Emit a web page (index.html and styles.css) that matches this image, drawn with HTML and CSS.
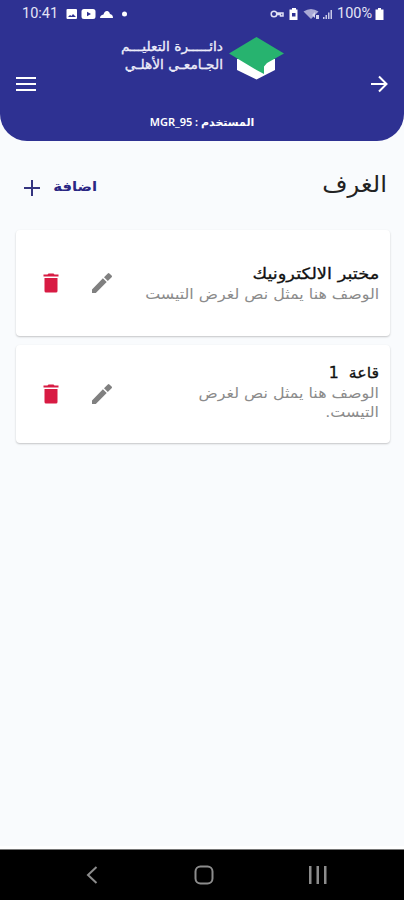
FILE: index.html
```html
<!DOCTYPE html>
<html lang="ar" dir="rtl">
<head>
    <meta charset="UTF-8">
    <meta name="viewport" content="width=device-width, initial-scale=1.0">
    <title>الغرف</title>
    <link rel="stylesheet" href="styles.css">
</head>
<body>

<div class="header">
    <div class="statusbar" dir="ltr">
        <span class="clock">10:41</span>
        <svg class="notifications" width="66" height="12" viewBox="0 0 66 12" fill="#fff">
            <path fill-rule="evenodd" d="M1.500 1h8.500q1 0 1 1v8q0 1-1 1h-8.500q-1 0-1-1v-8q0-1 1-1zM2 9h8l-3-3-1.500 2-1.500-1z"/>
            <path fill-rule="evenodd" d="M18 1h9q2.500 0 2.500 2.500v5q0 2.500-2.500 2.500h-9q-2.500 0-2.500-2.500v-5q0-2.500 2.500-2.500zM21 3.800v4.400l4-2.200z"/>
            <path d="M34 10q0-3 3.500-3.500 1-4 4-3.500 2 .3 2.500 3 3 .5 3 4z"/>
            <circle cx="58.500" cy="6" r="2.500"/>
        </svg>
        <svg class="signals" width="64" height="12" viewBox="0 0 64 12" fill="#fff">
            <g fill="none" stroke="#e0e0f4" stroke-width="1.500">
                <circle cx="4" cy="6" r="2.800"/>
                <path d="M7 5h6v3h-2.500V6.500H7"/>
            </g>
            <path fill-rule="evenodd" d="M22 0h4v1.500h1.500V12h-8V1.500H22zM22 5v3.500h3.500V5z"/>
            <path fill="#a9a9d5" d="M33.500 3.500q7.500-5 15 0l-7.500 7.500z"/>
            <path d="M42 7l3-3v6zM46 7h3v4h-3z" fill="#d5d5ee"/>
            <path fill="#c9c9e8" d="M53 9h1.500v2H53zM55.500 7H57v4h-1.500zM58 4.500h1.500V11H58zM60.500 2H62v9h-1.500z"/>
        </svg>
        <span class="percent">100%</span>
        <svg width="9" height="12" viewBox="0 0 9 12" fill="#fff"><path d="M3 0h3v1.500h2.500V12H.5V1.500H3z"/></svg>
    </div>

    <div class="topbar">
        <svg class="back" width="18" height="18" viewBox="0 0 18 18" fill="none" stroke="#fff" stroke-width="2"><path d="M1 9h15M9 1.500L16.500 9 9 16.500"/></svg>
        <div class="brand">
            <svg width="56" height="44" viewBox="0 0 56 44">
                <path fill="#fff" d="M8 22v11l19.500 9.500L46 33V22z"/>
                <path fill="#27b36f" d="M27.500 0L55 16.500 38 26 35 29.500V37L27.500 33 0 16.500z"/>
            </svg>
            <div class="brand-name">
                <span>دائـــــرة التعليـــم</span>
                <span>الجـامعـي الأهلـي</span>
            </div>
        </div>
        <svg class="menu" width="20" height="14" viewBox="0 0 20 14" fill="#fff"><path d="M0 0h20v2H0zM0 6h20v2H0zM0 12h20v2H0z"/></svg>
    </div>

    <div class="user">المستخدم : <bdi>MGR_95</bdi></div>
</div>

<div class="content">
    <div class="title-row">
        <h1>الغرف</h1>
        <div class="add">
            <span>اضافة</span>
            <svg width="16" height="16" viewBox="0 0 16 16" fill="#34347f"><path d="M7 0h2v7h7v2H9v7H7V9H0V7h7z"/></svg>
        </div>
    </div>

    <div class="card">
        <div class="card-text">
            <h2>مختبر الالكترونيك</h2>
            <p>الوصف هنا يمثل نص لغرض التيست</p>
        </div>
        <div class="actions">
            <svg width="20" height="20" viewBox="0 0 20 20" fill="#808080"><path d="M0 16.500V20h3.800L14.700 9.100l-3.800-3.800zM12 4.200l3.800 3.800L19.600 4.200q.8-.8 0-1.600L17.400.4q-.8-.8-1.600 0z"/></svg>
            <svg width="16" height="20" viewBox="0 0 16 20" fill="#d81b43"><path d="M1.500 5h13v13q0 1.500-1.500 1.500H3q-1.500 0-1.500-1.500zM.5 1.500H4.500L5.500.5h5l1 1h4v2H.5z"/></svg>
        </div>
    </div>

    <div class="card second">
        <div class="card-text">
            <h2>قاعة&nbsp; 1</h2>
            <p>الوصف هنا يمثل نص لغرض<br>التيست.</p>
        </div>
        <div class="actions">
            <svg width="20" height="20" viewBox="0 0 20 20" fill="#808080"><path d="M0 16.500V20h3.800L14.700 9.100l-3.800-3.800zM12 4.200l3.800 3.800L19.600 4.200q.8-.8 0-1.600L17.400.4q-.8-.8-1.600 0z"/></svg>
            <svg width="16" height="20" viewBox="0 0 16 20" fill="#d81b43"><path d="M1.500 5h13v13q0 1.500-1.500 1.500H3q-1.500 0-1.500-1.500zM.5 1.500H4.500L5.500.5h5l1 1h4v2H.5z"/></svg>
        </div>
    </div>
</div>

<div class="navbar" dir="ltr">
    <svg width="12" height="18" viewBox="0 0 12 18" fill="none" stroke="#8c8c8c" stroke-width="2"><path d="M10.500 1L2 9l8.500 8"/></svg>
    <svg width="20" height="20" viewBox="0 0 20 20" fill="none" stroke="#8c8c8c" stroke-width="2"><rect x="1.500" y="1.500" width="17" height="17" rx="5"/></svg>
    <svg width="18" height="18" viewBox="0 0 18 18" fill="#8c8c8c"><path d="M0 0h2.500v18H0zM7.500 0H10v18H7.500zM15 0h2.500v18H15z"/></svg>
</div>

</body>
</html>
```
FILE: styles.css
```css
* {
    box-sizing: border-box;
}
body {
    font-family: "DejaVu Sans", sans-serif;
    margin: 0;
    height: 900px;
    display: flex;
    flex-direction: column;
    background-color: #f9fbfd;
    color: #222;
    overflow: hidden;
}
svg {
    display: block;
    flex: none;
}
h1, h2, p {
    margin: 0;
    font-weight: normal;
    white-space: nowrap;
    transform-origin: right center;
}
.header {
    height: 141px;
    background-color: #2e3192;
    border-radius: 0 0 27px 27px;
    color: #fff;
}
.statusbar {
    display: flex;
    align-items: center;
    height: 27px;
    padding: 0 20px 0 22px;
    font-family: Roboto, sans-serif;
    font-size: 14.5px;
    color: #e4e4f6;
}
.clock {
    width: 44px;
}
.signals {
    margin-left: auto;
}
.percent {
    margin-left: 3px;
    width: 38px;
}
.topbar {
    display: flex;
    justify-content: space-between;
    height: 83px;
    padding: 0 16px;
}
.back {
    margin-top: 48px;
}
.menu {
    margin-top: 50px;
}
.brand {
    display: flex;
    gap: 6px;
    padding-top: 10px;
}
.brand-name {
    display: flex;
    flex-direction: column;
    width: 101px;
    padding-top: 1px;
    font-size: 13px;
    line-height: 18px;
    white-space: nowrap;
    color: #eeeefa;
    -webkit-text-stroke: 0.3px #eeeefa;
    transform: scaleX(1.06);
    transform-origin: right center;
}
.user {
    text-align: center;
    font-family: "Noto Sans", "DejaVu Sans", sans-serif;
    font-size: 11px;
    font-weight: 600;
    line-height: 24px;
}
.content {
    flex: 1;
    padding: 0 14px 0 16px;
    border-bottom: 3px solid #fff;
}
.title-row {
    display: flex;
    justify-content: space-between;
    height: 89px;
    padding: 26px 3px 0 8px;
}
h1 {
    font-size: 23px;
    line-height: 34px;
    transform: scaleX(1.06);
}
.add {
    display: flex;
    gap: 16px;
    padding-top: 13px;
    font-size: 13px;
    font-weight: bold;
    line-height: 14px;
    color: #2a2683;
}
.add span {
    transform: scaleX(1.15);
}
.card {
    display: flex;
    justify-content: space-between;
    height: 106px;
    padding: 35px 11px 0 27px;
    background-color: #fff;
    border-radius: 4px;
    box-shadow: 0 1px 2px rgba(0, 0, 0, 0.22);
}
.card.second {
    height: 98px;
    margin-top: 9px;
    padding-top: 19px;
}
h2 {
    font-size: 15.5px;
    line-height: 18px;
    color: #111;
    -webkit-text-stroke: 0.3px #111;
    transform: scaleX(1.15);
}
.second h2 {
    font-size: 15px;
    transform: scaleX(1.05);
}
p {
    font-size: 14px;
    line-height: 19px;
    color: #8b8b8b;
    padding-top: 2px;
    transform: scaleX(1.135);
}
.actions {
    display: flex;
    gap: 33px;
    padding-top: 8px;
}
.second .actions {
    padding-top: 20px;
}
.navbar {
    display: flex;
    align-items: center;
    justify-content: space-between;
    height: 51px;
    padding: 0 77px 0 86px;
    background-color: #000;
    border-top: 1px solid #777;
}
```
